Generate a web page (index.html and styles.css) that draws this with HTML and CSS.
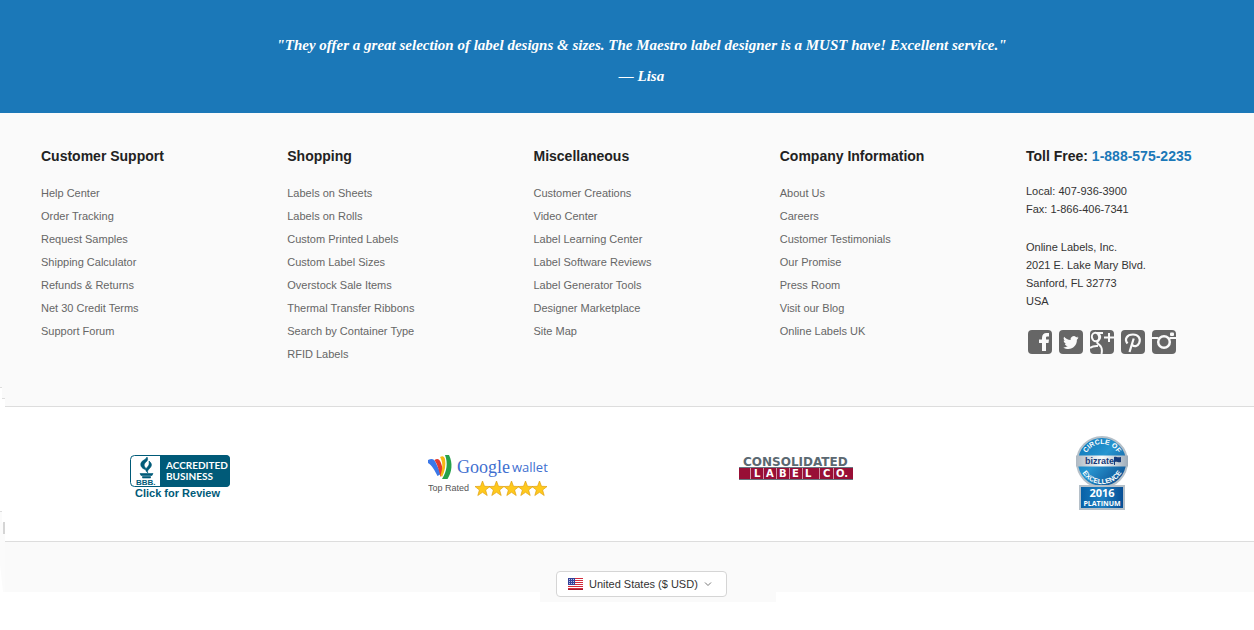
FILE: index.html
```html
<!DOCTYPE html>
<html lang="en">
<head>
    <meta charset="UTF-8">
    <meta name="viewport" content="width=device-width, initial-scale=1.0">
    <title>Online Labels</title>
    <link rel="stylesheet" href="styles.css">
</head>
<body>
    <section class="testimonial">
        <blockquote>
            <p>"They offer a great selection of label designs &amp; sizes. The Maestro label designer is a MUST have! Excellent service."</p>
            <cite>— Lisa</cite>
        </blockquote>
    </section>

    <footer>
        <div class="footer-links">
            <nav class="column" aria-label="Customer Support">
                <h2>Customer Support</h2>
                <ul>
                    <li><a href="#">Help Center</a></li>
                    <li><a href="#">Order Tracking</a></li>
                    <li><a href="#">Request Samples</a></li>
                    <li><a href="#">Shipping Calculator</a></li>
                    <li><a href="#">Refunds &amp; Returns</a></li>
                    <li><a href="#">Net 30 Credit Terms</a></li>
                    <li><a href="#">Support Forum</a></li>
                </ul>
            </nav>
            <nav class="column" aria-label="Shopping">
                <h2>Shopping</h2>
                <ul>
                    <li><a href="#">Labels on Sheets</a></li>
                    <li><a href="#">Labels on Rolls</a></li>
                    <li><a href="#">Custom Printed Labels</a></li>
                    <li><a href="#">Custom Label Sizes</a></li>
                    <li><a href="#">Overstock Sale Items</a></li>
                    <li><a href="#">Thermal Transfer Ribbons</a></li>
                    <li><a href="#">Search by Container Type</a></li>
                    <li><a href="#">RFID Labels</a></li>
                </ul>
            </nav>
            <nav class="column" aria-label="Miscellaneous">
                <h2>Miscellaneous</h2>
                <ul>
                    <li><a href="#">Customer Creations</a></li>
                    <li><a href="#">Video Center</a></li>
                    <li><a href="#">Label Learning Center</a></li>
                    <li><a href="#">Label Software Reviews</a></li>
                    <li><a href="#">Label Generator Tools</a></li>
                    <li><a href="#">Designer Marketplace</a></li>
                    <li><a href="#">Site Map</a></li>
                </ul>
            </nav>
            <nav class="column" aria-label="Company Information">
                <h2>Company Information</h2>
                <ul>
                    <li><a href="#">About Us</a></li>
                    <li><a href="#">Careers</a></li>
                    <li><a href="#">Customer Testimonials</a></li>
                    <li><a href="#">Our Promise</a></li>
                    <li><a href="#">Press Room</a></li>
                    <li><a href="#">Visit our Blog</a></li>
                    <li><a href="#">Online Labels UK</a></li>
                </ul>
            </nav>
            <div class="column contact">
                <h2>Toll Free: <a href="tel:18885752235">1-888-575-2235</a></h2>
                <p>Local: 407-936-3900<br>Fax: 1-866-406-7341</p>
                <address>Online Labels, Inc.<br>2021 E. Lake Mary Blvd.<br>Sanford, FL 32773<br>USA</address>
                <div class="social">
                    <a href="#" aria-label="Facebook">
                        <svg viewBox="0 0 24 24"><rect width="24" height="24" rx="4" fill="#666"/><path d="M14 21v-8h-3v-3.500h3V8c0-3.500 1.800-5 4.500-5H21v3.500h-1.500c-1.300 0-1.500.5-1.500 1.500v1.500h3l-.5 3.500H18v8z" fill="#fafafa"/></svg>
                    </a>
                    <a href="#" aria-label="Twitter">
                        <svg viewBox="0 0 24 24"><rect width="24" height="24" rx="4" fill="#666"/><path d="M19.500 7.600c-.6.3-1.200.4-1.800.5.700-.4 1.100-1 1.400-1.700-.6.400-1.300.6-2 .8a3.200 3.200 0 0 0-5.500 2.900c-2.600-.1-5-1.400-6.500-3.300-.9 1.500-.4 3.300 1 4.200-.5 0-1-.2-1.400-.4 0 1.600 1.100 2.900 2.500 3.200-.5.100-1 .1-1.400.1.400 1.200 1.600 2.100 3 2.200-1.300 1-2.900 1.500-4.600 1.300 6.600 4 13.900-.3 13.700-7.600.6-.6 1.200-1.300 1.600-2.200z" fill="#fafafa"/></svg>
                    </a>
                    <a href="#" aria-label="Google Plus">
                        <svg viewBox="0 0 24 24"><rect width="24" height="24" rx="4" fill="#666"/><g fill="none" stroke="#fafafa"><ellipse cx="5.500" cy="7" rx="3.600" ry="4.200" stroke-width="2" transform="rotate(-12 5.500 7)"/><path d="M6 3h7M9 4c1.500 2 1.500 4.500-.5 6.500-2.500 2-1 3 .7 4.300 2.500 2 3.300 5 2.300 9.200M0 18c2-1.800 5-2.200 8-2" stroke-width="2"/><path d="M14 7.500h10M19 3v9" stroke-width="2"/></g></svg>
                    </a>
                    <a href="#" aria-label="Pinterest">
                        <svg viewBox="0 0 24 24"><rect width="24" height="24" rx="4" fill="#666"/><path d="M6.500 13.500C3 9 6 4.500 12 4.500c5.500 0 8 4.300 6.200 8.500-1.700 3.800-5.200 4-6.700 1.800M12.700 8.500 8.500 22" fill="none" stroke="#fafafa" stroke-width="2.200"/></svg>
                    </a>
                    <a href="#" aria-label="Instagram">
                        <svg viewBox="0 0 24 24"><rect width="24" height="24" rx="4" fill="#666"/><path d="M0 8h6.500M17.500 8H24" stroke="#fafafa" stroke-width="2"/><circle cx="12" cy="12" r="5.800" fill="none" stroke="#fafafa" stroke-width="2.500"/><rect x="18" y="2.500" width="4" height="3.500" rx="1" fill="#fafafa"/></svg>
                    </a>
                </div>
            </div>
        </div>

        <div class="badges">
            <a href="#" aria-label="BBB Accredited Business">
                <svg class="bbb" viewBox="0 0 100 44" width="100" height="44">
                    <rect x=".5" y=".5" width="99" height="31" rx="4" fill="#fff" stroke="#005a78"/>
                    <path d="M30 0h66a4 4 0 0 1 4 4v24a4 4 0 0 1-4 4H30z" fill="#005a78"/>
                    <path d="M17 2c1.500 3 0 4-2 6-2 2.500 0 4 2 7-5-1-7-4-6-7 1-3 5-3 6-6zM19 6c3.500 3 3 5 0 8-1.500 1.500-2 3-1 4-3-2-2.500-4-.5-6 1.500-1.500 2-3 1.500-6zM10 18.500h13l-1 2H11zM12.500 21.500h8V23h-8z" fill="#005a78" stroke="#005a78" stroke-width=".6"/>
                    <text x="6" y="30" class="bbb-name">BBB.</text>
                    <text x="36" y="14" class="bbb-status">ACCREDITED</text>
                    <text x="36" y="25" class="bbb-status">BUSINESS</text>
                    <text x="5" y="42" class="bbb-review">Click for Review</text>
                </svg>
            </a>
            <a href="#" aria-label="Google Wallet">
                <svg class="wallet" viewBox="0 0 120 44" width="120" height="44">
                    <path d="M0 5c4-2 6-1 7.500 2l5.500 12-3.500 2C7 16 4 10 0 8z" fill="#3c78e8"/>
                    <path d="M6.500 5c3-2 5-1 6.500 3l2.500 8-3 6C11 16 10 10 6.500 5z" fill="#e33b2e"/>
                    <path d="M12 2c3-1.500 4-.5 5 2 1 6 0 12-3 18l-1.500-2c2.500-7 2.500-13-.5-18z" fill="#f6b914"/>
                    <path d="M17 0h4c4 8 3 17-1.500 24H14c5-8 6-16 3-24z" fill="#26a14a"/>
                    <text x="29" y="18" class="wallet-google">Google</text>
                    <text x="84" y="17" class="wallet-word">wallet</text>
                    <text x="0" y="36" class="wallet-rated">Top Rated</text>
                    <defs><path id="star" d="M7.500 0l2 5.300 5.500.2-4.400 3.500 1.600 5.500-4.700-3.200-4.700 3.200L4.400 9 0 5.500l5.500-.2z" fill="#ffc91c" stroke="#e0a010" stroke-width=".7"/></defs>
                    <use href="#star" x="47" y="26"/><use href="#star" x="61" y="26"/><use href="#star" x="76" y="26"/><use href="#star" x="90" y="26"/><use href="#star" x="104" y="26"/>
                </svg>
            </a>
            <a href="#" aria-label="Consolidated Label Co.">
                <svg class="consolidated" viewBox="0 0 114 26" width="114" height="26">
                    <text x="4" y="11" class="cl-name">CONSOLIDATED</text>
                    <path d="M0 12h114v13H0z" fill="#980f36"/>
                    <path d="M0 12.500h114M0 24.500h114" stroke="#667580"/>
                    <path d="M11.500 13v11M24.500 13v11M37.500 13v11M50.500 13v11M63.500 13v11M80.500 13v11M94.500 13v11" stroke="#d397a7"/>
                    <g class="cl-label"><text x="15" y="22">L</text><text x="27" y="22">A</text><text x="40" y="22">B</text><text x="53" y="22">E</text><text x="66" y="22">L</text><text x="84" y="22">C</text><text x="97" y="22">O.</text></g>
                </svg>
            </a>
            <a href="#" aria-label="Bizrate Circle of Excellence">
                <svg class="bizrate" viewBox="0 0 54 76" width="54" height="76">
                    <defs>
                        <linearGradient id="blue" x1="0" y1="0" x2="1" y2="1"><stop offset="0" stop-color="#0871b4"/><stop offset=".45" stop-color="#2795d0"/><stop offset="1" stop-color="#063f83"/></linearGradient>
                        <linearGradient id="plate" x1="0" x2="1"><stop offset="0" stop-color="#0760a6"/><stop offset=".5" stop-color="#1d7fc1"/><stop offset="1" stop-color="#064c93"/></linearGradient>
                        <linearGradient id="silver" x1="0" x2="1"><stop offset="0" stop-color="#aeb9c3"/><stop offset=".5" stop-color="#f8fafb"/><stop offset="1" stop-color="#9dacba"/></linearGradient>
                        <path id="arc-top" d="M9 26a18 18 0 0 1 36 0"/>
                        <path id="arc-bottom" d="M4 25a23 23 0 0 0 46 0"/>
                    </defs>
                    <circle cx="27" cy="26" r="25" fill="url(#blue)" stroke="#b5c0c9" stroke-width="2"/>
                    <text class="biz-ring"><textPath href="#arc-top" startOffset="50%">CIRCLE OF</textPath></text>
                    <text class="biz-ring"><textPath href="#arc-bottom" startOffset="50%">EXCELLENCE</textPath></text>
                    <path d="M1 19.500h52v11H1z" fill="url(#silver)"/>
                    <text x="10" y="28" class="biz-name">bizrate</text>
                    <path d="M39 21c2-1 3 1 7 0v5c-3 1-4-1-6 0v3h-1z" fill="#173a78"/>
                    <rect x="5" y="50" width="44" height="23" fill="url(#plate)" stroke="#b5c0c9" stroke-width="2"/>
                    <text x="27" y="61" class="biz-year">2016</text>
                    <text x="27" y="70" class="biz-level">PLATINUM</text>
                </svg>
            </a>
        </div>

        <div class="region">
            <div class="region-tab">
                <label class="currency">
                    <svg class="flag" viewBox="0 0 15 12" width="15" height="12" aria-hidden="true">
                        <path d="M0 0h15v12H0z" fill="#fff"/>
                        <path d="M0 .5h15M0 2.500h15M0 4.500h15M0 6.500h15M0 8.500h15M0 10.500h15" stroke="#d22b3c"/>
                        <path d="M0 0h7v7H0z" fill="#34429a"/>
                        <path d="M1 1.500h6M1 3.500h6M1 5.500h6" stroke="#b9bfe0" stroke-dasharray="1 1"/>
                        <path d="M0 11.500h15" stroke="#a5182b"/>
                    </svg>
                    <select aria-label="Country and currency">
                        <option>United States ($ USD)</option>
                    </select>
                    <svg class="chevron" viewBox="0 0 8 6" width="8" height="6" aria-hidden="true"><path d="M1 1.500l3 3 3-3" fill="none" stroke="#777"/></svg>
                </label>
            </div>
        </div>
        <svg class="edge" viewBox="0 0 5 205" width="5" height="205" aria-hidden="true">
            <path d="M0 0h2v11h3v194H0z" fill="#fff"/>
            <path d="M0 125h2v11h3v69H3l-3-28z" fill="#fbfbfb"/>
            <path d="M0 .5h2M2 11.500h3M0 124.500h2" stroke="#ddd"/>
            <path d="M3 135h2v12H3z" fill="#d5d5d5"/>
        </svg>
    </footer>
</body>
</html>
```
FILE: styles.css
```css
* {
    box-sizing: border-box;
}
body {
    font-family: "Liberation Sans", Arial, sans-serif;
    font-size: 11px;
    color: #333;
    background: #fff;
    margin: 0;
    min-height: 100vh;
}
a {
    color: inherit;
    text-decoration: none;
}

/* Testimonial */
.testimonial {
    background: #1b78b8;
    color: #fff;
    padding: 34px 0 26px 29px;
    text-align: center;
    font-family: "Liberation Serif", Georgia, serif;
    font-size: 15px;
    font-style: italic;
    font-weight: bold;
    line-height: 22px;
}
.testimonial blockquote {
    margin: 0;
}
.testimonial p {
    margin: 0 0 9px;
}
.testimonial cite {
    display: block;
}

/* Footer columns */
footer {
    position: relative;
}
.footer-links {
    display: grid;
    grid-template-columns: repeat(4, 1fr) 228px;
    padding: 34px 0 40px 41px;
    background: #fafafa;
}
.column h2 {
    margin: 0 0 17px;
    font-size: 14px;
    line-height: 18px;
    color: #222;
}
.column ul {
    list-style: none;
    margin: 0;
    padding: 0;
}
.column li {
    line-height: 23px;
    color: #666;
}
.contact p,
.contact address {
    margin: 0 0 20px;
    font-style: normal;
    line-height: 18px;
}
.contact h2 a {
    color: #1b78b8;
}
.social {
    display: flex;
    gap: 7px;
    padding-left: 2px;
}
.social svg {
    display: block;
    width: 24px;
    height: 24px;
}

/* Badges */
.badges {
    display: grid;
    grid-template-columns: repeat(3, 1fr) 304px;
    justify-items: center;
    margin-left: 5px;
    padding: 29px 0 29px 21px;
    border-top: 1px solid #ddd;
    border-bottom: 1px solid #ddd;
}
.badges svg {
    display: block;
}
.bbb,
.wallet,
.consolidated {
    margin-top: 19px;
}
.bbb text {
    font-weight: bold;
    fill: #005a78;
}
.bbb .bbb-name {
    font-size: 8px;
}
.bbb .bbb-status {
    font-family: Lato, sans-serif;
    font-size: 10px;
    fill: #fff;
}
.bbb .bbb-review {
    font-size: 11px;
}
.wallet-google {
    font-family: "Liberation Serif", serif;
    font-size: 18px;
    fill: #3f6fd0;
}
.wallet-word {
    font-family: "Open Sans", sans-serif;
    font-size: 13px;
    fill: #3f6fd0;
}
.wallet-rated {
    font-size: 9px;
    fill: #555;
}
.cl-name {
    font-family: "DejaVu Sans", sans-serif;
    font-size: 12px;
    font-weight: bold;
    fill: #5b6871;
}
.cl-label {
    font-family: "DejaVu Sans", sans-serif;
    font-size: 10px;
    font-weight: bold;
    fill: #fff;
}
.biz-ring {
    font-size: 7px;
    font-weight: bold;
    fill: #fff;
    text-anchor: middle;
}
.biz-name {
    font-size: 9px;
    font-weight: bold;
    fill: #173a78;
}
.biz-year,
.biz-level {
    font-family: "Open Sans", sans-serif;
    font-weight: bold;
    fill: #fff;
    text-anchor: middle;
}
.biz-year {
    font-size: 11px;
}
.biz-level {
    font-size: 7px;
}

/* Country picker */
.region {
    display: flex;
    justify-content: center;
    margin-left: 5px;
    padding: 29px 0 0 57px;
    background: #fafafa;
}
.region-tab {
    width: 236px;
    margin-bottom: -10px;
    padding: 0 16px 5px;
    background: #fafafa;
}
.currency {
    display: flex;
    align-items: center;
    width: 171px;
    height: 26px;
    padding: 0 14px 0 11px;
    border: 1px solid #d5d5d5;
    border-radius: 4px;
    background: #fff;
}
.currency select {
    flex: 1;
    appearance: none;
    margin: 0 0 0 6px;
    padding: 0;
    border: 0;
    background: transparent;
    color: #333;
    font-family: inherit;
    font-size: 11px;
}
.edge {
    position: absolute;
    top: 274px;
    left: 0;
}
```
